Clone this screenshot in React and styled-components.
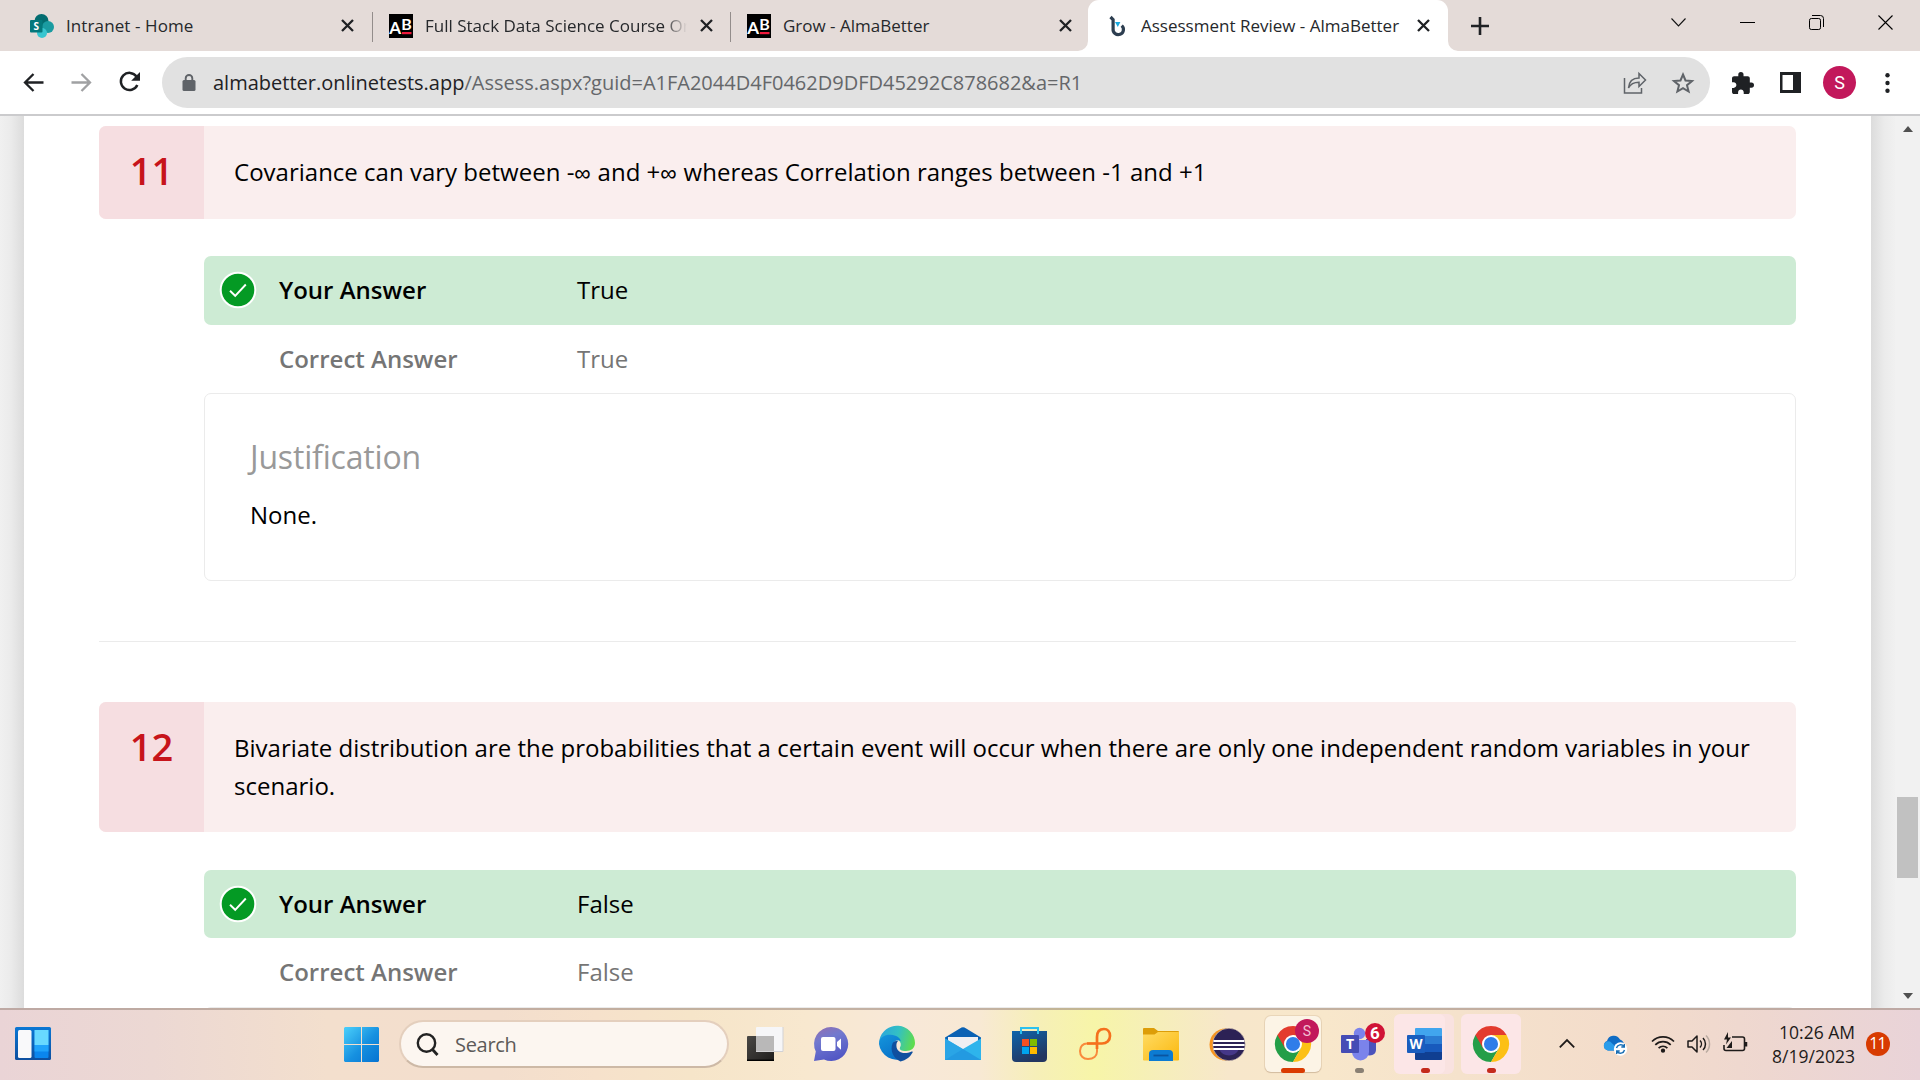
import React from "react";
import styled, { createGlobalStyle } from "styled-components";

const Global = createGlobalStyle`
  *, *::before, *::after { box-sizing: border-box; }
  html, body { margin: 0; padding: 0; overflow: hidden; }
  body { font-family: "Open Sans", "Noto Sans", sans-serif; color: #000; background: #fff; }
  svg { display: block; flex: none; overflow: visible; }
`;

const Screen = styled.div`
  width: 1920px;
  height: 1080px;
  display: flex;
  flex-direction: column;
  overflow: hidden;
`;

/* ---------- browser chrome ---------- */

const TabStrip = styled.header`
  height: 51px;
  flex: none;
  display: flex;
  background: #e4dbd8;
  padding-left: 14px;
`;

const Tab = styled.div`
  position: relative;
  width: ${(p) => p.$width}px;
  height: 51px;
  display: flex;
  align-items: center;
  padding: 0 ${(p) => p.$right || 14}px 0 16px;
  background: ${(p) => (p.$active ? "#fff" : "transparent")};
  border-radius: ${(p) => (p.$active ? "11px 11px 0 0" : "0")};
`;

const TabFoot = styled.svg`
  position: absolute;
  bottom: 0;
  ${(p) => (p.$side === "left" ? "left: -10px;" : "right: -10px;")}
`;

const TabTitle = styled.span`
  flex: 1;
  min-width: 0;
  margin: 0 ${(p) => p.$gap || 12}px 0 ${(p) => p.$start || 12}px;
  font-size: 17px;
  line-height: 24px;
  letter-spacing: ${(p) => p.$track || 0}px;
  color: #26282b;
  white-space: nowrap;
  overflow: hidden;
  ${(p) => p.$fade && "mask-image: linear-gradient(90deg, #000 91%, transparent 100%);"}
`;

const TabDivider = styled.div`
  width: 1px;
  height: 30px;
  margin-top: 12px;
  background: #938d8b;
`;

const NewTab = styled.div`
  width: 64px;
  display: flex;
  align-items: center;
  justify-content: center;
`;

const WindowControls = styled.div`
  margin-left: auto;
  display: flex;
  height: 44px;
`;

const ControlButton = styled.div`
  width: 69px;
  display: flex;
  align-items: center;
  justify-content: center;
`;

const Toolbar = styled.div`
  height: 65px;
  flex: none;
  display: flex;
  align-items: center;
  padding: 0 17px 2px 17px;
  background: #fff;
  border-bottom: 2px solid #cbcbcd;
`;

const NavIcons = styled.div`
  width: 145px;
  display: flex;
  align-items: center;
  padding-top: 1px;
`;

const NavButton = styled.div`
  width: 48px;
  padding-left: 6px;
`;

const Omnibox = styled.div`
  width: 1548px;
  height: 51px;
  margin-top: 2px;
  border-radius: 26px;
  background: #e1e1e1;
  display: flex;
  align-items: center;
  padding: 0 15px 0 20px;
`;

const Url = styled.div`
  flex: 1;
  margin-left: 17px;
  font-size: 20px;
  line-height: 28px;
  color: #65676a;
  white-space: nowrap;
`;

const Host = styled.span`
  color: #1f2124;
`;

const OmniboxActions = styled.div`
  display: flex;
  align-items: center;
  gap: 24px;
`;

const ToolbarActions = styled.div`
  flex: 1;
  display: flex;
  align-items: center;
  padding-top: 2px;
`;

const Action = styled.div`
  flex: none;
  margin-left: ${(p) => p.$before}px;
`;

const Avatar = styled.div`
  width: 33px;
  height: 33px;
  border-radius: 50%;
  background: #c2185b;
  color: #fff;
  font: 400 18px/33px Roboto, sans-serif;
  text-align: center;
`;

/* ---------- page ---------- */

const Viewport = styled.main`
  height: 892px;
  flex: none;
  display: flex;
  overflow: hidden;
  background: #f0f0f0;
`;

const Gutter = styled.div`
  width: 24px;
  flex: none;
  background: ${(p) =>
    p.$side === "left"
      ? "linear-gradient(90deg, #f0f0f0 0%, #ebebeb 45%, #dcdcdc 100%)"
      : "linear-gradient(270deg, #f0f0f0 0%, #ebebeb 45%, #dcdcdc 100%)"};
`;

const Sheet = styled.div`
  width: 1847px;
  flex: none;
  background: #fff;
  padding: 10px 75px 0 75px;
  height: 892px;
  overflow: hidden;
`;

const Scrollbar = styled.div`
  width: 25px;
  flex: none;
  background: #f1f1f1;
  display: flex;
  flex-direction: column;
  align-items: center;
  padding: 10px 0 9px;
  margin-left: auto;
`;

const Thumb = styled.div`
  width: 21px;
  height: 81px;
  margin: 665px 0 auto;
  background: #c1c1c1;
`;

const Arrow = styled.div`
  width: 0;
  height: 0;
  border: 5.5px solid transparent;
  ${(p) =>
    p.$up
      ? "border-bottom: 6px solid #505050; border-top: 0;"
      : "border-top: 6px solid #505050; border-bottom: 0;"}
`;

const Question = styled.div`
  display: flex;
  height: ${(p) => p.$height}px;
  background: #faeeee;
  border-radius: 7px;
  overflow: hidden;
`;

const QuestionNumber = styled.div`
  width: 105px;
  flex: none;
  background: #f6dee1;
  color: #c7141b;
  font-size: 38px;
  font-weight: 600;
  line-height: 52px;
  text-align: center;
  padding-top: 18px;
`;

const QuestionText = styled.div`
  padding: 27px 30px 0 30px;
  font-size: 24px;
  line-height: 38px;
  letter-spacing: 0.008px;
`;

const Infinity = styled.span`
  display: inline-block;
  width: 17px;
  font-family: "Liberation Sans", sans-serif;
  font-size: 23px;
  line-height: 24px;
`;

const Answers = styled.div`
  margin: ${(p) => p.$top}px 0 0 105px;
`;

const AnswerRow = styled.div`
  height: ${(p) => p.$height}px;
  display: flex;
  align-items: center;
  padding-bottom: ${(p) => p.$lift || 0}px;
  border-radius: 7px;
  background: ${(p) => (p.$given ? "#cdebd4" : "transparent")};
  color: ${(p) => (p.$given ? "#000" : "#757575")};
  font-size: 24px;
  line-height: 34px;
`;

const AnswerIcon = styled.div`
  width: 75px;
  padding-left: 16px;
`;

const AnswerLabel = styled.div`
  width: 298px;
  font-weight: 600;
`;

const Justification = styled.section`
  height: 188px;
  border: 1px solid #ebebeb;
  border-radius: 7px;
  padding: 41px 45px;
`;

const JustTitle = styled.h3`
  margin: 0;
  font-size: 32px;
  font-weight: 400;
  line-height: 44px;
  letter-spacing: -0.18px;
  color: #999;
`;

const JustText = styled.p`
  margin: 17px 0 0;
  font-size: 24px;
  line-height: 38px;
`;

const Rule = styled.hr`
  margin: 60px 0;
  height: 1px;
  border: 0;
  background: #ebebeb;
`;

/* ---------- taskbar ---------- */

const Taskbar = styled.footer`
  height: 72px;
  flex: none;
  display: flex;
  align-items: stretch;
  border-top: 2px solid rgba(160, 140, 130, 0.6);
  background:
    linear-gradient(90deg, #ead4d6 0%, #ecd8d3 8%, #f3dfcd 17%, #f3decd 26%, #f6e1cb 31%, #f6e5c9 36%,
      #f8e8cf 42%, #f8e8d8 47%, #f8e9d4 51%, #f6efb8 54%, #f7f5a8 57%, #f6efb8 60%, #f7e7cb 64%,
      #f8e7cb 69%, #f5e2cc 76%, #f3dccb 85%, #eed7d0 92%, #e9d3d8 100%);
`;

const WidgetSlot = styled.div`
  width: 328px;
  display: flex;
  align-items: center;
  padding: 0 0 3px 15px;
`;

const StartSlot = styled.div`
  width: 71px;
  display: flex;
  align-items: center;
  padding: 0 0 1px 16px;
`;

const SearchBox = styled.div`
  width: 330px;
  height: 48px;
  margin: 10px 3px 0 0;
  border-radius: 24px;
  border: 2px solid #e4cfbd;
  border-bottom-color: #cdb9a6;
  background: #fcf6f0;
  display: flex;
  align-items: center;
  padding-left: 15px;
  gap: 16px;
  font-size: 20px;
  letter-spacing: -0.3px;
  color: #5d5a58;
`;

const AppSlot = styled.div`
  position: relative;
  width: 66px;
  display: flex;
  align-items: center;
  justify-content: center;
  padding-bottom: 2px;
`;

const Tile = styled.div`
  position: absolute;
  top: ${(p) => p.$top || 4}px;
  left: ${(p) => p.$left}px;
  width: ${(p) => p.$width}px;
  height: ${(p) => p.$height || 60}px;
  border-radius: 6px;
  background: ${(p) => p.$color};
  ${(p) => p.$edge && "box-shadow: 0 0 0 1px rgba(190,165,130,.25), 0 1px 1px rgba(150,120,90,.3);"}
`;

const AppIcon = styled.div`
  position: relative;
`;

const Badge = styled.div`
  position: absolute;
  right: ${(p) => p.$right}px;
  top: ${(p) => p.$top}px;
  width: ${(p) => p.$size}px;
  height: ${(p) => p.$size}px;
  border-radius: 50%;
  background: ${(p) => p.$color};
  color: ${(p) => p.$ink || "#fff"};
  font-family: Roboto, sans-serif;
  font-size: ${(p) => p.$font}px;
  font-weight: ${(p) => p.$weight || 400};
  line-height: ${(p) => p.$size}px;
  text-align: center;
`;

const RunMark = styled.div`
  position: absolute;
  left: 50%;
  bottom: 7px;
  width: ${(p) => p.$width}px;
  height: 5px;
  margin-left: ${(p) => -p.$width / 2}px;
  border-radius: 3px;
  background: ${(p) => p.$color};
`;

const Tray = styled.div`
  flex: 1;
  display: flex;
  align-items: center;
  padding-left: 35px;
  padding-bottom: 3px;
`;

const TrayIcon = styled.div`
  margin-right: ${(p) => p.$after}px;
`;

const Clock = styled.div`
  width: 84px;
  text-align: right;
  font-size: 17.5px;
  line-height: 24px;
  color: #1e1b1a;
  white-space: nowrap;
`;

const Count = styled.div`
  width: 24px;
  height: 24px;
  margin-left: 11px;
  border-radius: 50%;
  background: #d83b01;
  color: #fff;
  font-size: 16px;
  line-height: 23px;
  letter-spacing: -1px;
  text-indent: -1px;
  text-align: center;
`;

/* ---------- drawings ---------- */

const CloseX = () => (
  <svg width="13" height="13" viewBox="0 0 13 13">
    <path d="M1 1l11 11M12 1L1 12" stroke="#1f2124" strokeWidth="2.3" fill="none" />
  </svg>
);

const SharePoint = () => (
  <svg width="24" height="24" viewBox="0 0 24 24">
    <circle cx="11.5" cy="7" r="7" fill="#036c70" />
    <circle cx="18" cy="13" r="6" fill="#1a9ba1" />
    <circle cx="12" cy="19" r="5" fill="#37c6d0" />
    <rect x="0" y="6" width="12.5" height="12.5" rx="1" fill="#03787c" />
    <text x="6.3" y="15.7" textAnchor="middle" fontSize="10" fontWeight="700" fontFamily="Open Sans" fill="#fff">S</text>
  </svg>
);

const AlmaBetter = () => (
  <svg width="24" height="24" viewBox="0 0 24 24">
    <rect width="24" height="24" fill="#000" />
    <text x="0.3" y="19.6" fontSize="17" fontWeight="700" fontFamily="Lato" fill="#fff">A</text>
    <text x="12.3" y="15.8" fontSize="16" fontWeight="700" fontFamily="Lato" fill="#fff">B</text>
    <rect x="13" y="18" width="9.5" height="2.2" fill="#f0193c" />
  </svg>
);

const Assess = () => (
  <svg width="24" height="24" viewBox="0 0 24 24">
    <path d="M6.500 3l2.600 2.600v9.200a5.200 5.200 0 1 0 8.600-3.200" fill="none" stroke="#2d3e50" strokeWidth="3.200" />
    <path d="M11 8h5.400l-2.600 5z" fill="#18a9e0" />
  </svg>
);

const Check = () => (
  <svg width="36" height="36" viewBox="0 0 36 36">
    <circle cx="18" cy="18" r="17.3" fill="#049a24" stroke="#fff" strokeWidth="2" />
    <path d="M10 18.8l5.200 5 10.600-11.300" fill="none" stroke="#fff" strokeWidth="1.9" />
  </svg>
);

const Chrome = () => (
  <svg width="36" height="36" viewBox="0 0 48 48">
    <path d="M24 24L3.2 12A24 24 0 0 0 24 48l10.400-18z" fill="#249e48" />
    <path d="M24 12h20.800A24 24 0 0 1 24 48l10.400-18z" fill="#fcc015" />
    <path d="M3.200 12L13.600 30 24 24V12h20.800A24 24 0 0 0 3.200 12z" fill="#e33b2e" />
    <circle cx="24" cy="24" r="12" fill="#fff" />
    <circle cx="24" cy="24" r="9.400" fill="#2f7de9" />
  </svg>
);

const TaskView = () => (
  <svg width="36" height="34" viewBox="0 0 36 34">
    <defs>
      <linearGradient id="tv" x1="0" y1="0" x2="1" y2="1">
        <stop offset="0" stopColor="#4a4845" /><stop offset="1" stopColor="#1f1e1d" />
      </linearGradient>
    </defs>
    <rect x="0" y="9" width="27" height="25" rx="1" fill="url(#tv)" />
    <rect x="0" y="32.600" width="27" height="1.400" fill="#000" />
    <rect x="9" y="0" width="27" height="25" rx="1" fill="#f6f6f8" />
    <rect x="9" y="9" width="18" height="15.500" fill="#b9b8b8" />
    <path d="M9 24.500h27V0" fill="none" stroke="#d2d2d5" />
  </svg>
);

const Chat = () => (
  <svg width="34" height="34" viewBox="0 0 34 34">
    <defs>
      <linearGradient id="ct" x1="0.2" y1="0" x2="0.6" y2="1">
        <stop offset="0" stopColor="#8e70b4" /><stop offset="0.35" stopColor="#7179cf" /><stop offset="1" stopColor="#5055c4" />
      </linearGradient>
    </defs>
    <path d="M17 0a17 17 0 1 1-7 32.400L0 34l1.800-9.500A17 17 0 0 1 17 0z" fill="url(#ct)" />
    <rect x="7" y="10" width="14.500" height="14" rx="2" fill="#fff" />
    <path d="M23 15l4-3.600v11.400L23 19z" fill="#fff" />
  </svg>
);

const Edge = () => (
  <svg width="36" height="36" viewBox="0 0 36 36">
    <defs>
      <linearGradient id="eg1" x1="0" y1="0.3" x2="1" y2="0.5">
        <stop offset="0" stopColor="#2ba6dc" /><stop offset="0.5" stopColor="#33c0c4" /><stop offset="1" stopColor="#5fdc4d" />
      </linearGradient>
      <linearGradient id="eg2" x1="0" y1="0" x2="0.6" y2="1">
        <stop offset="0" stopColor="#1596dc" /><stop offset="1" stopColor="#0870c8" />
      </linearGradient>
    </defs>
    <path d="M0.400 14A18 18 0 0 1 36 17c0 5-3.800 8-9 8-5 0-7-1.800-6-3.600 1.500-2.500 1-5.400-1.600-7.400C14 9.500 5 10 0.400 17z" fill="url(#eg1)" />
    <path d="M0 18C0 11 6 8.500 11.500 8.700c6 .2 9.500 3.300 10.500 6.300-4.500-2.500-8.500 1-8.500 6.500 0 7 6 11.500 12 10.500A18 18 0 0 1 0 18z" fill="url(#eg2)" />
    <path d="M13.500 17.500c-2.600 6.500.5 14.500 8 18A18 18 0 0 0 33.600 26.500c.4-.9-.3-1.300-1-1-8 3.600-15.200.7-15.200-6 0-1.900.6-3.500 1.800-4.700-2.500-.2-4.700.8-5.700 2.700z" fill="#0f4f9f" />
  </svg>
);

const Mail = () => (
  <svg width="36" height="34" viewBox="0 0 36 34">
    <path d="M0 10.500L16.500.6a3 3 0 0 1 3 0L36 10.500V16H0z" fill="#0a61b4" />
    <path d="M3 10h30v8L18 27 3 18z" fill="#efeff2" />
    <path d="M0 11.500L18 22 36 11.500V33H0z" fill="#2eb4ec" />
    <path d="M0 11.500L36 33H0z" fill="#2aa5e6" />
    <path d="M18 22L36 33H0z" fill="#1e92dd" opacity=".55" />
  </svg>
);

const Store = () => (
  <svg width="35" height="35" viewBox="0 0 35 35">
    <defs>
      <linearGradient id="st" x1="0" y1="0" x2="0.5" y2="1">
        <stop offset="0" stopColor="#0d65ac" /><stop offset="1" stopColor="#233660" />
      </linearGradient>
    </defs>
    <path d="M0 4h35v27a4 4 0 0 1-4 4H4a4 4 0 0 1-4-4z" fill="url(#st)" />
    <path d="M9 7V1h17v6" fill="none" stroke="#2cc1ef" strokeWidth="2" />
    <path d="M10 12h7v7h-7z" fill="#f25022" />
    <path d="M18 12h7v7h-7z" fill="#7fba00" />
    <path d="M10 20h7v7h-7z" fill="#00a4ef" />
    <path d="M18 20h7v7h-7z" fill="#ffb900" />
  </svg>
);

const Loop = () => (
  <svg width="32" height="32" viewBox="0 0 32 32" fill="none">
    <path d="M18 15.500H8c-4 0-7 3-7 7.500s3 8 8 8c5.500 0 9-3 9-7.500V9" stroke="#f98a3c" strokeWidth="2" />
    <path d="M8 15.500h15c4.500 0 8-3 8-7.500s-2.500-7-6-7c-4 0-7 2.500-7 8v12" stroke="#f5701d" strokeWidth="2.700" />
  </svg>
);

const Explorer = () => (
  <svg width="36" height="33" viewBox="0 0 36 33">
    <defs>
      <linearGradient id="ex" x1="0" y1="0" x2="1" y2="1">
        <stop offset="0" stopColor="#ffdb63" /><stop offset="1" stopColor="#fbb80e" />
      </linearGradient>
    </defs>
    <path d="M0 1a1 1 0 0 1 1-1h10l4 3h20a1 1 0 0 1 1 1v28H0z" fill="#dd9d08" />
    <path d="M0 6.500h11.500L15 4h21v27.500a1 1 0 0 1-1 1H1a1 1 0 0 1-1-1z" fill="url(#ex)" />
    <path d="M6 33V26a4 4 0 0 1 4-4h16a4 4 0 0 1 4 4v7z" fill="#0c7bd2" />
    <path d="M10.500 27.500h15" stroke="#0a55a0" strokeWidth="1.800" />
  </svg>
);

const Eclipse = () => (
  <svg width="36" height="33" viewBox="0 0 36 33">
    <circle cx="16.500" cy="16.500" r="16" fill="#f7941e" />
    <circle cx="20" cy="16.500" r="16.300" fill="#2c2255" stroke="#f8e7cb" strokeWidth="0.500" />
    <path d="M10 21a11 11 0 0 0 20 0z" fill="#453788" />
    <path d="M4.500 13h30.800M4 17h31.600M4.500 21h30.800" stroke="#fff" strokeWidth="1.900" />
  </svg>
);

const Teams = () => (
  <svg width="36" height="32" viewBox="0 0 36 32">
    <circle cx="30" cy="8" r="4" fill="#5059c9" />
    <path d="M25 11h10v11a6 6 0 0 1-10 4z" fill="#4b53bc" />
    <circle cx="18.500" cy="5.500" r="5.700" fill="#7b83eb" />
    <path d="M11 12h17v12a8.500 8.500 0 0 1-17 0z" fill="#7b83eb" />
    <rect x="0" y="7" width="18" height="18" rx="1" fill="#454cb5" />
    <text x="9" y="20.800" textAnchor="middle" fontSize="14" fontWeight="700" fontFamily="Open Sans" fill="#fff">T</text>
  </svg>
);

const Word = () => (
  <svg width="36" height="32" viewBox="0 0 36 32">
    <path d="M8 1a1 1 0 0 1 1-1h25a1 1 0 0 1 1 1v7H8z" fill="#41a5ee" />
    <path d="M8 8h27v8H8z" fill="#2b7cd3" />
    <path d="M8 16h27v8H8z" fill="#185abd" />
    <path d="M8 24h27v7a1 1 0 0 1-1 1H9a1 1 0 0 1-1-1z" fill="#103f91" />
    <rect x="0" y="7" width="18" height="18" rx="1" fill="#1a5dbe" />
    <text x="9" y="20.800" textAnchor="middle" fontSize="13.500" fontWeight="700" fontFamily="Open Sans" fill="#fff">W</text>
  </svg>
);

const Widgets = () => (
  <svg width="36" height="33" viewBox="0 0 36 33">
    <defs>
      <linearGradient id="wg" x1="0" y1="0" x2="0" y2="1">
        <stop offset="0" stopColor="#0a77d4" /><stop offset="1" stopColor="#0d4f9f" />
      </linearGradient>
    </defs>
    <rect width="36" height="33" rx="1.500" fill="url(#wg)" />
    <rect x="3" y="3" width="13.500" height="28" rx="1.500" fill="#f9f9fa" />
    <rect x="19.500" y="3" width="14" height="28" rx="1" fill="#0a86ee" />
    <path d="M19.500 3h14v15h-14z" fill="#68d9ff" />
    <path d="M19.500 18h14v6.500h-14z" fill="#1fa3fb" />
  </svg>
);

const Windows = () => (
  <svg width="35" height="35" viewBox="0 0 35 35">
    <defs>
      <linearGradient id="wn" gradientUnits="userSpaceOnUse" x1="0" y1="0" x2="35" y2="35">
        <stop offset="0" stopColor="#4bd0fb" /><stop offset="0.550" stopColor="#1690e0" /><stop offset="1" stopColor="#0673d1" />
      </linearGradient>
    </defs>
    <path d="M1 0h16v17H0V1zM18 0h16l1 1v16H18zM0 18h17v17H1l-1-1zM18 18h17v16l-1 1H18z" fill="url(#wn)" />
  </svg>
);

export default function App() {
  return (
    <Screen>
      <Global />
      <TabStrip>
        <Tab $width={358} $right={18}>
          <SharePoint />
          <TabTitle $track={0.1}>Intranet - Home</TabTitle>
          <CloseX />
        </Tab>
        <TabDivider />
        <Tab $width={357} $right={17}>
          <AlmaBetter />
          <TabTitle $fade $gap={13}>Full Stack Data Science Course On</TabTitle>
          <CloseX />
        </Tab>
        <TabDivider />
        <Tab $width={357} $right={16}>
          <AlmaBetter />
          <TabTitle>Grow - AlmaBetter</TabTitle>
          <CloseX />
        </Tab>
        <Tab $active $width={360} $right={18}>
          <TabFoot $side="left" width="10" height="10" viewBox="0 0 10 10">
            <path d="M10 0v10H0A10 10 0 0 0 10 0z" fill="#fff" />
          </TabFoot>
          <Assess />
          <TabTitle $start={13} $gap={4}>Assessment Review - AlmaBetter</TabTitle>
          <CloseX />
          <TabFoot $side="right" width="10" height="10" viewBox="0 0 10 10">
            <path d="M0 0v10h10A10 10 0 0 1 0 0z" fill="#fff" />
          </TabFoot>
        </Tab>
        <NewTab>
          <svg width="18" height="18" viewBox="0 0 18 18">
            <path d="M9 0v18M0 9h18" stroke="#1f2124" strokeWidth="2.600" />
          </svg>
        </NewTab>
        <WindowControls>
          <ControlButton>
            <svg width="15" height="9" viewBox="0 0 15 9"><path d="M.5.5l7 7.500 7-7.500" fill="none" stroke="#111" strokeWidth="1.100" /></svg>
          </ControlButton>
          <ControlButton>
            <svg width="15" height="1" viewBox="0 0 15 1"><path d="M0 .5h15" stroke="#000" /></svg>
          </ControlButton>
          <ControlButton>
            <svg width="15" height="15" viewBox="0 0 15 15" fill="none" stroke="#000">
              <rect x=".5" y="3.500" width="11" height="11" rx="1.800" />
              <path d="M3 .5h8.500a3 3 0 0 1 3 3V12" />
            </svg>
          </ControlButton>
          <ControlButton>
            <svg width="15" height="15" viewBox="0 0 15 15"><path d="M.5.5l14 14M14.500.5l-14 14" stroke="#000" strokeWidth="1.100" /></svg>
          </ControlButton>
        </WindowControls>
      </TabStrip>

      <Toolbar>
        <NavIcons>
          <NavButton>
            <svg width="21" height="19" viewBox="0 0 21 19"><path d="M20.500 9.500H2.500M10.500 1L2 9.500l8.500 8.500" fill="none" stroke="#1f2124" strokeWidth="2.300" /></svg>
          </NavButton>
          <NavButton>
            <svg width="21" height="19" viewBox="0 0 21 19"><path d="M.5 9.500h18M10.500 1L19 9.500 10.500 18" fill="none" stroke="#a0a1a3" strokeWidth="2.300" /></svg>
          </NavButton>
          <NavButton>
            <svg width="21" height="20" viewBox="0 0 21 20">
              <path d="M17.500 4.500A8.600 8.600 0 1 0 18.300 13" fill="none" stroke="#1f2124" strokeWidth="2.500" />
              <path d="M21 0v8.800h-8.800z" fill="#1f2124" />
            </svg>
          </NavButton>
        </NavIcons>
        <Omnibox>
          <svg width="14" height="17" viewBox="0 0 14 17">
            <rect x="0.500" y="6" width="13" height="11" rx="1.500" fill="#5f6368" />
            <path d="M3.700 7V4.300a3.300 3.300 0 0 1 6.600 0V7" fill="none" stroke="#5f6368" strokeWidth="1.900" />
          </svg>
          <Url><Host>almabetter.onlinetests.app</Host>/Assess.aspx?guid=A1FA2044D4F0462D9DFD45292C878682&amp;a=R1</Url>
          <OmniboxActions>
            <svg width="24" height="22" viewBox="0 0 24 22" fill="none" stroke="#5f6368" strokeWidth="1.500">
              <path d="M1.500 6v15h17v-5" />
              <path d="M5.500 16c.5-6.500 4-10 10.500-10V1.500L22.500 8 16 14.500V10.300c-5 0-8.500 1.700-10.500 5.700z" />
            </svg>
            <svg width="24" height="24" viewBox="0 0 24 24" fill="none" stroke="#5f6368" strokeWidth="2">
              <path d="M12 3.500l2.500 6 6.500.5-5 4.200 1.600 6.300L12 17.100 6.400 20.500 8 14.200 3 10l6.500-.5z" />
            </svg>
          </OmniboxActions>
        </Omnibox>
        <ToolbarActions>
          <Action $before={22}>
            <svg width="22" height="22" viewBox="2 1 21 21">
              <path fill="#1f2124" d="M20.500 11H19V7c0-1.100-.9-2-2-2h-4V3.500a2.500 2.500 0 0 0-5 0V5H4c-1.100 0-1.990.9-1.990 2v3.800H3.500c1.490 0 2.700 1.210 2.700 2.700s-1.210 2.700-2.700 2.700H2V20c0 1.100.9 2 2 2h3.800v-1.500c0-1.490 1.210-2.700 2.700-2.700s2.700 1.210 2.700 2.700V22H17c1.100 0 2-.9 2-2v-4h1.500a2.500 2.500 0 0 0 0-5z" />
            </svg>
          </Action>
          <Action $before={26}>
            <svg width="21" height="21" viewBox="0 0 21 21">
              <path fill="#1f2124" fillRule="evenodd" d="M0 0h21v21H0zM2.500 3v15h10.500V3z" />
            </svg>
          </Action>
          <Action $before={22}><Avatar>S</Avatar></Action>
          <Action $before={29}>
            <svg width="5" height="20" viewBox="0 0 5 20" fill="#1f2124">
              <circle cx="2.500" cy="2.200" r="2.200" /><circle cx="2.500" cy="10" r="2.200" /><circle cx="2.500" cy="17.800" r="2.200" />
            </svg>
          </Action>
        </ToolbarActions>
      </Toolbar>

      <Viewport>
        <Gutter $side="left" />
        <Sheet>
          <Question $height={93}>
            <QuestionNumber>11</QuestionNumber>
            <QuestionText>
              Covariance can vary between -<Infinity>∞</Infinity> and +<Infinity>∞</Infinity> whereas Correlation ranges between -1 and +1
            </QuestionText>
          </Question>
          <Answers $top={37}>
            <AnswerRow $given $height={69} $lift={2}>
              <AnswerIcon><Check /></AnswerIcon>
              <AnswerLabel>Your Answer</AnswerLabel>
              True
            </AnswerRow>
            <AnswerRow $height={68}>
              <AnswerIcon />
              <AnswerLabel>Correct Answer</AnswerLabel>
              True
            </AnswerRow>
            <Justification>
              <JustTitle>Justification</JustTitle>
              <JustText>None.</JustText>
            </Justification>
          </Answers>
          <Rule />
          <Question $height={130}>
            <QuestionNumber>12</QuestionNumber>
            <QuestionText>Bivariate distribution are the probabilities that a certain event will occur when there are only one independent random variables in your scenario.</QuestionText>
          </Question>
          <Answers $top={38}>
            <AnswerRow $given $height={68}>
              <AnswerIcon><Check /></AnswerIcon>
              <AnswerLabel>Your Answer</AnswerLabel>
              False
            </AnswerRow>
            <AnswerRow $height={69} $lift={2}>
              <AnswerIcon />
              <AnswerLabel>Correct Answer</AnswerLabel>
              False
            </AnswerRow>
            <Justification />
          </Answers>
        </Sheet>
        <Gutter $side="right" />
        <Scrollbar>
          <Arrow $up />
          <Thumb />
          <Arrow />
        </Scrollbar>
      </Viewport>

      <Taskbar>
        <WidgetSlot><Widgets /></WidgetSlot>
        <StartSlot><Windows /></StartSlot>
        <SearchBox>
          <svg width="23" height="23" viewBox="0 0 23 23" fill="none" stroke="#222">
            <circle cx="10.500" cy="10" r="8.700" strokeWidth="2.400" />
            <path d="M16.500 16.500l5 5.500" strokeWidth="2.800" />
          </svg>
          Search
        </SearchBox>
        <AppSlot><TaskView /></AppSlot>
        <AppSlot><Chat /></AppSlot>
        <AppSlot><Edge /></AppSlot>
        <AppSlot><Mail /></AppSlot>
        <AppSlot><Store /></AppSlot>
        <AppSlot><Loop /></AppSlot>
        <AppSlot><Explorer /></AppSlot>
        <AppSlot><Eclipse /></AppSlot>
        <AppSlot>
          <Tile $edge $top={6} $left={5} $width={56} $height={56} $color="#fcf4e6" />
          <AppIcon>
            <Chrome />
            <Badge $right={-8} $top={-7} $size={24} $font={14} $color="#c2185b" $ink="#f3bfd2">S</Badge>
          </AppIcon>
          <RunMark $width={24} $color="#da3b01" />
        </AppSlot>
        <AppSlot>
          <AppIcon>
            <Teams />
            <Badge $right={-8} $top={-5} $size={20} $font={17} $weight={700} $color="#d01336">6</Badge>
          </AppIcon>
          <RunMark $width={9} $color="#8a8074" />
        </AppSlot>
        <AppSlot>
          <Tile $left={36} $width={26} $color="#f9e2e0" />
          <Tile $left={2} $width={51} $color="#fce6e7" />
          <AppIcon><Word /></AppIcon>
          <RunMark $width={9} $color="#c42b1c" />
        </AppSlot>
        <AppSlot>
          <Tile $left={3} $width={60} $color="#fce6e7" />
          <AppIcon><Chrome /></AppIcon>
          <RunMark $width={9} $color="#c42b1c" />
        </AppSlot>
        <Tray>
          <TrayIcon $after={28}>
            <svg width="16" height="9" viewBox="0 0 16 9"><path d="M.8 8.300L8 1l7.200 7.300" fill="none" stroke="#1e1b1a" strokeWidth="1.800" /></svg>
          </TrayIcon>
          <TrayIcon $after={24}>
            <svg width="24" height="20" viewBox="0 0 24 20">
              <path d="M5 16.500a5 5 0 0 1-1-9.500 7 7 0 0 1 13-1.500 6 6 0 0 1 4 4.500v6.500z" fill="#0f6cc4" />
              <path d="M1 10a5 5 0 0 1 6-2.500l10 9H5A5 5 0 0 1 1 10z" fill="#2a9cea" />
              <circle cx="17.500" cy="15" r="6.700" fill="#fff" />
              <path d="M13.500 14a4.200 4.200 0 0 1 7.500-1.500M21.500 16a4.200 4.200 0 0 1-7.500 1.500M21.300 10v3h-3M13.700 20v-3h3" fill="none" stroke="#1a6fb5" strokeWidth="1.400" />
            </svg>
          </TrayIcon>
          <TrayIcon $after={12}>
            <svg width="24" height="18" viewBox="0 0 24 18" fill="none" stroke="#1e1b1a" strokeWidth="1.700">
              <path d="M1 6.500a15.500 15.500 0 0 1 22 0M4.300 9.800a10.900 10.900 0 0 1 15.400 0M7.600 13.100a6.200 6.200 0 0 1 8.800 0" />
              <circle cx="12" cy="15.700" r="1.300" fill="#1e1b1a" />
            </svg>
          </TrayIcon>
          <TrayIcon $after={12}>
            <svg width="24" height="20" viewBox="0 0 24 20" fill="none" stroke="#1e1b1a" strokeWidth="1.500">
              <path d="M1 7h4l5-5v16l-5-5H1z" strokeLinejoin="round" />
              <path d="M13 6.500a5 5 0 0 1 0 7M16 4a8.500 8.500 0 0 1 0 12" />
              <path d="M19 1.500a12 12 0 0 1 0 17" stroke="#b9aaa0" />
            </svg>
          </TrayIcon>
          <TrayIcon $after={24}>
            <svg width="24" height="21" viewBox="0 0 24 21" fill="none" stroke="#1e1b1a" strokeWidth="1.600">
              <path d="M9 4h10.500a2 2 0 0 1 2 2v9.500a2 2 0 0 1-2 2H3a2 2 0 0 1-2-2V12" />
              <path d="M23 9v4.500" strokeWidth="2.500" />
              <path d="M5 -1L1 6.500h3l-1 5 5-7H5z" fill="#1e1b1a" stroke="none" />
              <path d="M3.500 15l5.500-7v7z" fill="#1e1b1a" stroke="none" />
            </svg>
          </TrayIcon>
          <Clock>
            <div>10:26 AM</div>
            <div>8/19/2023</div>
          </Clock>
          <Count>11</Count>
        </Tray>
      </Taskbar>
    </Screen>
  );
}
